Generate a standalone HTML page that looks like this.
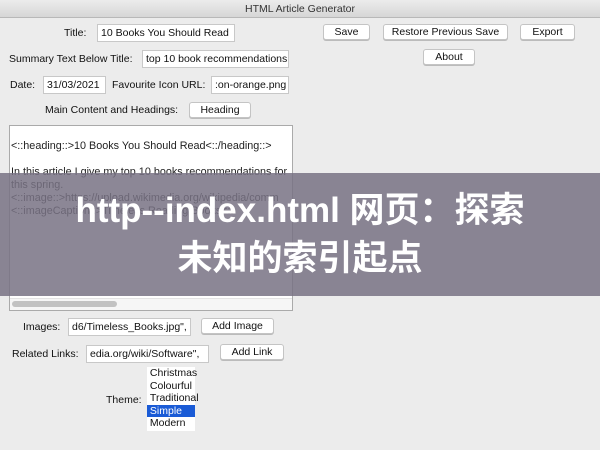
<!DOCTYPE html>
<html><head><meta charset="utf-8"><style>
*{box-sizing:border-box;margin:0;padding:0}
body{width:600px;height:450px;background:#ececec;font-family:"Liberation Sans",sans-serif;font-size:10.5px;color:#111;position:relative;overflow:hidden}
.a{position:absolute;white-space:nowrap}
.tb{left:0;top:0;width:600px;height:18px;background:linear-gradient(#ececec,#d6d6d6);border-bottom:1px solid #b8b8b8;text-align:center;line-height:18px;font-size:10.5px;color:#333}
.f{background:#fff;border:1px solid #c8c8c8;height:18px;line-height:16px;padding-left:3px;overflow:hidden}
.b{background:#fff;border:1px solid #c4c4c4;border-radius:3px;height:16px;line-height:14px;text-align:center;box-shadow:0 1px 0 #bbb}
.l{line-height:14px}
</style></head><body>
<div class="a tb">HTML Article Generator</div>
<div class="a l" style="left:64px;top:26px">Title:</div>
<div class="a f" style="left:97px;top:24px;width:138px">10 Books You Should Read</div>
<div class="a l" style="left:9px;top:52px">Summary Text Below Title:</div>
<div class="a f" style="left:142px;top:50px;width:147px">top 10 book recommendations</div>
<div class="a l" style="left:10px;top:78px">Date:</div>
<div class="a f" style="left:43px;top:76px;width:63px">31/03/2021</div>
<div class="a l" style="left:112px;top:78px">Favourite Icon URL:</div>
<div class="a f" style="left:211px;top:76px;width:78px">:on-orange.png</div>
<div class="a l" style="left:45px;top:103px">Main Content and Headings:</div>
<div class="a b" style="left:189px;top:102px;width:62px">Heading</div>
<div class="a b" style="left:323px;top:24px;width:47px">Save</div>
<div class="a b" style="left:383px;top:24px;width:125px">Restore Previous Save</div>
<div class="a b" style="left:520px;top:24px;width:55px">Export</div>
<div class="a b" style="left:423px;top:49px;width:52px">About</div>
<div class="a" style="left:9px;top:125px;width:284px;height:186px;background:#fff;border:1px solid #aaa;overflow:hidden">
<div style="position:absolute;left:1px;top:14px;line-height:13px;color:#222;font-size:10.8px">&lt;::heading::&gt;10 Books You Should Read&lt;::/heading::&gt;<br><br>In this article I give my top 10 books recommendations for<br>this spring.<br>&lt;::image::&gt;https://upload.wikimedia.org/wikipedia/comm<br>&lt;::imageCaption::&gt;Timeless Reading Books&lt;::</div>
<div style="position:absolute;left:0;bottom:0;width:100%;height:12px;background:#f6f6f6;border-top:1px solid #e4e4e4"></div>
<div style="position:absolute;left:2px;bottom:3px;width:105px;height:6px;border-radius:3px;background:#c2c2c2"></div>
</div>
<div class="a l" style="left:23px;top:320px">Images:</div>
<div class="a f" style="left:68px;top:318px;width:123px">d6/Timeless_Books.jpg",</div>
<div class="a b" style="left:201px;top:318px;width:73px">Add Image</div>
<div class="a l" style="left:12px;top:347px">Related Links:</div>
<div class="a f" style="left:86px;top:345px;width:123px">edia.org/wiki/Software",</div>
<div class="a b" style="left:220px;top:344px;width:64px">Add Link</div>
<div class="a l" style="left:106px;top:393px">Theme:</div>
<div class="a" style="left:147px;top:367px;width:48px;height:64px;background:#fff;line-height:12.6px">
<div>&nbsp;Christmas</div><div>&nbsp;Colourful</div><div>&nbsp;Traditional</div><div style="background:#1a5bd6;color:#fff">&nbsp;Simple</div><div>&nbsp;Modern</div></div>
<div class="a" style="left:0;top:173px;width:600px;height:123px;background:rgba(120,114,132,0.85)"></div>
<div class="a" style="left:0;top:187px;width:600px;text-align:center;color:#fff;font-weight:bold;font-size:35px;line-height:48px;font-family:'Liberation Sans','Noto Sans CJK SC',sans-serif">http--index.html 网页：探索<br>未知的索引起点</div>
</body></html>
